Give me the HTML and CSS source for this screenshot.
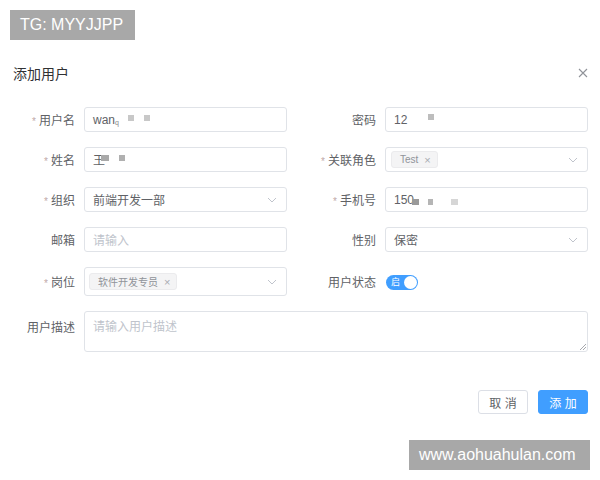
FILE: index.html
```html
<!DOCTYPE html>
<html lang="zh">
<head>
<meta charset="utf-8">
<link rel="stylesheet" href="styles.css">
</head>
<body>
<div class="wm wm-top">TG: MYYJJPP</div>
<div class="dialog">
  <div class="header">
    <span class="title">添加用户</span>
    <svg class="close" width="10" height="10" viewBox="0 0 10 10"><path d="M1 1L9 9M9 1L1 9" stroke="#909399" stroke-width="1.1" fill="none"/></svg>
  </div>
  <div class="form">
    <div class="item"><label class="lbl"><i>*</i>用户名</label><div class="ctl input">wan<span class="sub">q</span><span class="blk b1"></span><span class="blk b2"></span></div></div>
    <div class="item"><label class="lbl">密码</label><div class="ctl input">12<span class="blk b3"></span></div></div>

    <div class="item"><label class="lbl"><i>*</i>姓名</label><div class="ctl input">王<span class="blk b4"></span><span class="blk b5"></span></div></div>
    <div class="item"><label class="lbl"><i>*</i>关联角色</label><div class="ctl input sel"><span class="tag">Test<span class="tx">×</span></span><svg class="arrow" width="10" height="6" viewBox="0 0 10 6"><path d="M1 1L5 5L9 1" stroke="#c0c4cc" fill="none"/></svg></div></div>

    <div class="item"><label class="lbl"><i>*</i>组织</label><div class="ctl input sel">前端开发一部<svg class="arrow" width="10" height="6" viewBox="0 0 10 6"><path d="M1 1L5 5L9 1" stroke="#c0c4cc" fill="none"/></svg></div></div>
    <div class="item"><label class="lbl"><i>*</i>手机号</label><div class="ctl input">150<span class="blk b6"></span><span class="blk b7"></span><span class="blk b8"></span></div></div>

    <div class="item"><label class="lbl">邮箱</label><div class="ctl input ph">请输入</div></div>
    <div class="item"><label class="lbl">性别</label><div class="ctl input sel">保密<svg class="arrow" width="10" height="6" viewBox="0 0 10 6"><path d="M1 1L5 5L9 1" stroke="#c0c4cc" fill="none"/></svg></div></div>

    <div class="item"><label class="lbl"><i>*</i>岗位</label><div class="ctl input sel tall"><span class="tag">软件开发专员<span class="tx">×</span></span><svg class="arrow" width="10" height="6" viewBox="0 0 10 6"><path d="M1 1L5 5L9 1" stroke="#c0c4cc" fill="none"/></svg></div></div>
    <div class="item"><label class="lbl">用户状态</label><div class="ctl"><span class="switch"><span class="on">启</span><span class="knob"></span></span></div></div>

    <div class="item full"><label class="lbl top">用户描述</label><div class="ctl textarea ph">请输入用户描述<svg class="grip" width="6" height="6" viewBox="0 0 6 6"><path d="M0 6L6 0M3 6L6 3" stroke="#909399" stroke-width="0.8"/></svg></div></div>
  </div>
  <div class="footer">
    <button class="btn">取 消</button>
    <button class="btn primary">添 加</button>
  </div>
</div>
<div class="wm wm-bottom">www.aohuahulan.com</div>
</body>
</html>
```
FILE: styles.css
```css
* { box-sizing: border-box; }
body {
  margin: 0;
  width: 600px;
  height: 480px;
  background: #fff;
  font-family: "Liberation Sans", "Noto Sans CJK SC", sans-serif;
  color: #606266;
  position: relative;
  overflow: hidden;
}
.wm {
  position: absolute;
  background: #a8a8a8;
  color: #fff;
  font-size: 16px;
  line-height: 30px;
  height: 30px;
}
.wm-top { left: 10px; top: 10px; width: 125px; padding-left: 10px; }
.wm-bottom { left: 409px; top: 440px; width: 181px; padding-left: 10px; }

.dialog { padding-top: 63px; }
.header {
  display: flex;
  justify-content: space-between;
  align-items: center;
  height: 20px;
  padding: 0 12px 0 13px;
}
.title { font-size: 14px; color: #303133; }
.close { display: block; margin-right: 0; }

.form {
  margin-top: 24px;
  display: grid;
  grid-template-columns: 287px 287px;
  column-gap: 14px;
  row-gap: 15px;
}
.item { display: flex; align-items: center; }
.item.full { grid-column: 1 / 3; align-items: flex-start; }
.lbl {
  width: 84px;
  flex: none;
  text-align: right;
  padding-right: 9px;
  font-size: 12px;
  color: #606266;
}
.lbl.top { padding-top: 7px; }
.lbl i { font-style: normal; color: #c0a8a8; margin-right: 3px; font-size: 10px; }
.ctl { flex: 1; position: relative; }
.input {
  height: 25px;
  border: 1px solid #e0e3e8;
  border-radius: 3px;
  font-size: 12px;
  color: #606266;
  padding-left: 8px;
  display: flex;
  align-items: center;
}
.input.tall { height: 29px; padding-left: 4px; }
.sel { padding-right: 24px; }
.sel .tag { margin-left: -3px; }
.input.tall .tag { margin-left: 0; }
.ph { color: #c0c4cc; }
.arrow { position: absolute; right: 9px; top: 50%; margin-top: -3px; }
.tag {
  display: inline-flex;
  align-items: center;
  height: 17px;
  padding: 0 6px 0 8px;
  background: #f4f4f5;
  border: 1px solid #ebebed;
  border-radius: 3px;
  font-size: 10px;
  color: #909399;
}
.tx { margin-left: 6px; font-size: 11px; color: #a8abb2; }
.sub { font-size: 7px; margin-top: 6px; color: #888; }
.blk { position: absolute; width: 6px; height: 6px; background: #c8c8c8; }
.b1 { left: 43px; top: 7px; }
.b2 { left: 59px; top: 7px; }
.b3 { left: 42px; top: 6px; background: #bdbdbd; }
.b4 { left: 16px; top: 7px; width: 8px; background: #a9a9a9; }
.b5 { left: 34px; top: 7px; background: #b0b0b0; }
.b6 { left: 26px; top: 11px; width: 7px; background: #9a9a9a; }
.b7 { left: 42px; top: 11px; width: 5px; background: #b5b5b5; }
.b8 { left: 65px; top: 11px; width: 7px; background: #d6d6d6; }

.switch {
  display: inline-flex;
  align-items: center;
  justify-content: space-between;
  width: 32px;
  height: 15px;
  border-radius: 8px;
  background: #409eff;
  padding: 0 1px 0 5px;
  margin-left: 1px;
  vertical-align: middle;
}
.on { color: #fff; font-size: 9px; line-height: 15px; }
.knob { width: 13px; height: 13px; border-radius: 50%; background: #fff; }

.textarea {
  height: 41px;
  border: 1px solid #e0e3e8;
  border-radius: 3px;
  font-size: 12px;
  padding: 5px 8px;
}
.grip { position: absolute; right: 1px; bottom: 1px; }

.footer {
  margin-top: 38px;
  display: flex;
  justify-content: flex-end;
  gap: 10px;
  padding-right: 12px;
}
.btn {
  width: 50px;
  height: 24px;
  border: 1px solid #dcdfe6;
  border-radius: 3px;
  background: #fff;
  color: #606266;
  font-size: 12px;
  font-family: "Liberation Sans", "Noto Sans CJK SC", sans-serif;
  padding: 0;
}
.btn.primary { background: #409eff; border-color: #409eff; color: #fff; }
```
